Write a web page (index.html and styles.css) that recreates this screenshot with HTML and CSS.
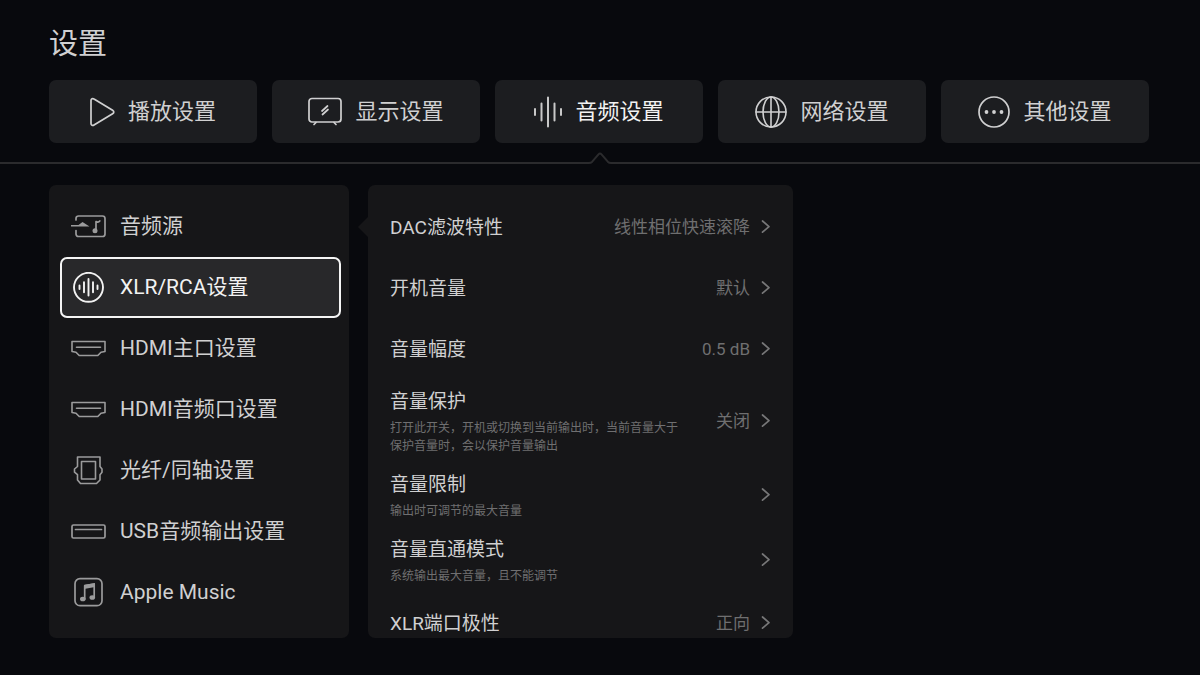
FILE: index.html
```html
<!DOCTYPE html>
<html lang="zh-CN">
<head>
    <meta charset="UTF-8">
    <meta name="viewport" content="width=device-width, initial-scale=1.0">
    <title>设置</title>
    <link rel="stylesheet" href="styles.css">
</head>
<body>

<h1 class="title">设置</h1>

<nav class="tabs">
    <button class="tab" type="button">
        <svg width="25" height="32" viewBox="0 0 25 32" stroke-width="1.7"><path d="M1 4.600v22.800c0 1.700 1.600 2.500 3 1.600l18.600-11.200c1.600-1 1.600-2.600 0-3.600L4 3c-1.400-.9-3-.1-3 1.600z"/></svg>
        <span>播放设置</span>
    </button>
    <button class="tab" type="button">
        <svg width="34" height="32" viewBox="0 0 34 32" stroke-width="1.7"><rect x="1" y="2.500" width="32" height="23.500" rx="3"/><path d="M8 26.500l-2 2M26 26.500l2 2M19.500 10l-5.500 5M20 13.500l-5.500 5"/></svg>
        <span>显示设置</span>
    </button>
    <button class="tab active" type="button">
        <svg width="28" height="32" viewBox="0 0 28 32" stroke-width="2"><path d="M1 13v6M7.500 7.500v17M14 1.500v29M20.500 7.500v17M27 13v6"/></svg>
        <span>音频设置</span>
    </button>
    <button class="tab" type="button">
        <svg width="32" height="32" viewBox="0 0 32 32" stroke-width="1.6"><circle cx="16" cy="16" r="15"/><ellipse cx="16" cy="16" rx="8" ry="15"/><path d="M16 1v30M1 16h30"/></svg>
        <span>网络设置</span>
    </button>
    <button class="tab" type="button">
        <svg width="32" height="32" viewBox="0 0 32 32" stroke-width="1.7"><circle cx="16" cy="16" r="15"/><g class="fill"><circle cx="8.500" cy="16" r="1.900"/><circle cx="16" cy="16" r="1.900"/><circle cx="23.500" cy="16" r="1.900"/></g></svg>
        <span>其他设置</span>
    </button>
</nav>

<div class="divider">
    <span class="line"></span>
    <svg width="24" height="13" viewBox="0 0 24 13" stroke-width="2"><path d="M0 12h1c1.500 0 2.300-.4 3.200-1.300l6.300-7.300c1-1.100 2-1.100 3 0l6.300 7.300c.9.900 1.700 1.300 3.200 1.300h1"/></svg>
    <span class="line"></span>
</div>

<main class="content">
    <nav class="sidebar">
        <button class="item" type="button">
            <svg width="35" height="31" viewBox="0 1 35 31" stroke-width="1.7"><path d="M5 10V8.500C5 7 6 6 7.500 6h24C33 6 34 7 34 8.500v15.500c0 1.500-1 2.500-2.500 2.500h-24C6 26.500 5 25.500 5 24v-3.500M25 21V11.500c1.500.8 2.800.7 3.800-.5"/><path class="fill" d="M0 15h7.500l4-3 7 4.500H0z"/><circle class="fill" cx="24" cy="20.700" r="2.500"/></svg>
            <span>音频源</span>
        </button>
        <button class="item selected" type="button">
            <svg width="35" height="31" viewBox="0 1 35 31" stroke-width="1.9"><circle cx="17.500" cy="16.300" r="14.500"/><path d="M8.500 14.500v3.600M13 11.300v10M17.500 8v16.600M22 11.300v10M26.500 14.500v3.600"/></svg>
            <span>XLR/RCA设置</span>
        </button>
        <button class="item" type="button">
            <svg width="35" height="31" viewBox="0 1 35 31" stroke-width="1.6"><path d="M1 9.500h33v10l-4 .7-3.200 3.300H8.200L5 20.200l-4-.7zM5.500 15.300h24"/></svg>
            <span>HDMI主口设置</span>
        </button>
        <button class="item" type="button">
            <svg width="35" height="31" viewBox="0 1 35 31" stroke-width="1.6"><path d="M1 9.500h33v10l-4 .7-3.200 3.300H8.200L5 20.200l-4-.7zM5.500 15.300h24"/></svg>
            <span>HDMI音频口设置</span>
        </button>
        <button class="item" type="button">
            <svg width="35" height="31" viewBox="0 1 35 31" stroke-width="1.600"><path d="M6.500 3h22.500v9.500l2 2.500v3.200l-2 2.500v5.300l-3.500 3.500H9.500L6.500 26v-5.300l-3-2.500V15l3-2.500zM10.500 7.500h14v17.500h-14z"/></svg>
            <span>光纤/同轴设置</span>
        </button>
        <button class="item" type="button">
            <svg width="35" height="31" viewBox="0 1 35 31" stroke-width="1.700"><rect x="1" y="10" width="33" height="13" rx="1.500"/><path d="M4.500 14.500h26"/></svg>
            <span>USB音频输出设置</span>
        </button>
        <button class="item" type="button">
            <svg width="35" height="31" viewBox="0 1 35 31" stroke-width="1.700"><rect x="4" y="2.700" width="27" height="27" rx="5"/><path d="M13.700 23V9.500l9.500-1.500v13"/><path class="fill" d="M13 9l11-2v4l-11 2z"/><ellipse class="fill" cx="11.800" cy="23" rx="2.800" ry="2.300"/><ellipse class="fill" cx="21.300" cy="21.500" rx="2.800" ry="2.300"/></svg>
            <span>Apple Music</span>
        </button>
    </nav>

    <section class="detail">
        <div class="rows">
            <button class="row" type="button">
                <span class="text"><span class="label">DAC滤波特性</span></span>
                <span class="value">线性相位快速滚降</span>
                <svg class="arrow" width="10" height="14" viewBox="0 0 10 14" stroke-width="1.7"><path d="M1.500 1l6.500 5.600-6.500 5.600"/></svg>
            </button>
            <button class="row" type="button">
                <span class="text"><span class="label">开机音量</span></span>
                <span class="value">默认</span>
                <svg class="arrow" width="10" height="14" viewBox="0 0 10 14" stroke-width="1.7"><path d="M1.500 1l6.500 5.600-6.500 5.600"/></svg>
            </button>
            <button class="row" type="button">
                <span class="text"><span class="label">音量幅度</span></span>
                <span class="value">0.5 dB</span>
                <svg class="arrow" width="10" height="14" viewBox="0 0 10 14" stroke-width="1.7"><path d="M1.500 1l6.500 5.600-6.500 5.600"/></svg>
            </button>
            <button class="row" type="button">
                <span class="text">
                    <span class="label">音量保护</span>
                    <span class="desc">打开此开关，开机或切换到当前输出时，当前音量大于保护音量时，会以保护音量输出</span>
                </span>
                <span class="value">关闭</span>
                <svg class="arrow" width="10" height="14" viewBox="0 0 10 14" stroke-width="1.7"><path d="M1.500 1l6.500 5.600-6.500 5.600"/></svg>
            </button>
            <button class="row" type="button">
                <span class="text">
                    <span class="label">音量限制</span>
                    <span class="desc">输出时可调节的最大音量</span>
                </span>
                <svg class="arrow" width="10" height="14" viewBox="0 0 10 14" stroke-width="1.7"><path d="M1.500 1l6.500 5.600-6.500 5.600"/></svg>
            </button>
            <button class="row" type="button">
                <span class="text">
                    <span class="label">音量直通模式</span>
                    <span class="desc">系统输出最大音量，且不能调节</span>
                </span>
                <svg class="arrow" width="10" height="14" viewBox="0 0 10 14" stroke-width="1.7"><path d="M1.500 1l6.500 5.600-6.500 5.600"/></svg>
            </button>
            <button class="row" type="button">
                <span class="text"><span class="label">XLR端口极性</span></span>
                <span class="value">正向</span>
                <svg class="arrow" width="10" height="14" viewBox="0 0 10 14" stroke-width="1.7"><path d="M1.500 1l6.500 5.600-6.500 5.600"/></svg>
            </button>
        </div>
    </section>
</main>

</body>
</html>
```
FILE: styles.css
```css
* {
    box-sizing: border-box;
}

body {
    font-family: Roboto, "Noto Sans CJK SC", sans-serif;
    background-color: #08090d;
    color: #d0d0d1;
    margin: 0;
    height: 100vh;
    display: flex;
    flex-direction: column;
    overflow: hidden;
}

button {
    font-family: inherit;
    color: inherit;
    background: none;
    border: none;
    padding: 0;
    text-align: left;
    cursor: pointer;
}

svg {
    flex: none;
    fill: none;
    stroke: currentColor;
    stroke-linecap: round;
    stroke-linejoin: round;
}

svg .fill {
    fill: currentColor;
    stroke: none;
}

.title {
    margin: 0;
    padding: 24px 49px 16px;
    font-size: 29px;
    font-weight: 400;
    line-height: 40px;
}

/* 顶部标签 */
.tabs {
    display: grid;
    grid-template-columns: repeat(5, 1fr);
    gap: 15px;
    padding: 0 51px 0 49px;
}

.tab {
    display: flex;
    align-items: center;
    justify-content: center;
    gap: 13px;
    height: 63px;
    background-color: #1c1d20;
    border-radius: 7px;
    font-size: 22px;
    line-height: 32px;
}

.tab.active {
    color: #f2f2f2;
}

.tab.active svg {
    color: #c8c8c8;
}

.divider {
    display: flex;
    align-items: flex-end;
    margin-top: 8px;
    color: #2b2b2d;
}

.line {
    flex: 1;
    height: 2px;
    background-color: #2b2b2d;
}

.content {
    flex: 1;
    min-height: 0;
    display: grid;
    grid-template-columns: 300fr 425fr 337fr;
    gap: 19px;
    padding: 21px 51px 37px 49px;
}

/* 左侧菜单 */
.sidebar {
    display: flex;
    flex-direction: column;
    padding: 11px 8px 11px 11px;
    background-color: #161618;
    border-radius: 7px;
}

.item {
    display: flex;
    align-items: center;
    gap: 14px;
    height: 61px;
    padding: 0 9px;
    border: 2px solid transparent;
    border-radius: 7px;
    font-size: 21px;
    line-height: 31px;
}

.item svg {
    color: #9b9b9c;
}

.item.selected {
    background-color: #28282a;
    border-color: #f5f5f5;
    color: #f2f2f2;
}

.item.selected svg {
    color: #f2f2f2;
}

/* 右侧选项 */
.detail {
    position: relative;
    min-height: 0;
}

.detail::before {
    content: "";
    position: absolute;
    top: 32px;
    left: -10px;
    border: 10px solid transparent;
    border-left: none;
    border-right-color: #161618;
}

.rows {
    height: 100%;
    padding: 11px 22px 0;
    background-color: #161618;
    border-radius: 7px;
    overflow: hidden;
}

.row {
    display: flex;
    align-items: center;
    gap: 11px;
    width: 100%;
    min-height: 61px;
    padding: 7px 0;
}

.text {
    flex: 1;
    padding-top: 2px;
}

.label,
.desc {
    display: block;
}

.label {
    font-size: 19px;
    line-height: 28px;
}

.desc {
    max-width: 294px;
    padding-top: 3px;
    color: #6f6f70;
    font-size: 12px;
    line-height: 18px;
}

.value {
    color: #6f6f70;
    font-size: 17px;
    line-height: 24px;
}

.arrow {
    color: #777778;
}
```
